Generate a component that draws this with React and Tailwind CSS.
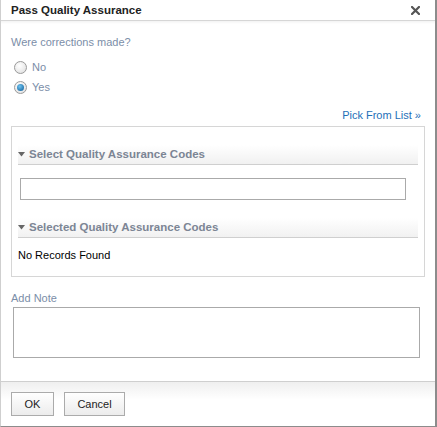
import { useState } from 'react'

const FONT = { fontFamily: '"Liberation Sans", Arial, sans-serif' }

function Radio({ checked, label, onClick }) {
  return (
    <label className="flex items-center gap-[5px] h-[20px] cursor-pointer" onClick={onClick}>
      <span
        className="w-[13px] h-[13px] rounded-full border border-[#9a9a9a] flex items-center justify-center"
        style={{ background: 'radial-gradient(circle at 40% 35%, #ffffff, #dcdcdc)' }}
      >
        {checked && (
          <span
            className="w-[7px] h-[7px] rounded-full"
            style={{ background: 'radial-gradient(circle at 40% 35%, #6fc3f0, #0b5a96)' }}
          />
        )}
      </span>
      <span className="text-[11px] text-[#7b8ea8]">{label}</span>
    </label>
  )
}

function SectionHead({ children }) {
  return (
    <div className="mx-[6px]">
      <div className="flex items-center gap-[4px] h-[19px] bg-gradient-to-b from-white to-[#f1f1f1]">
        <svg width="7" height="5" viewBox="0 0 7 5">
          <path d="M0 0 L7 0 L3.5 4.5 Z" fill="#666" />
        </svg>
        <span className="text-[11.5px] font-bold text-[#7c8594]">{children}</span>
      </div>
      <div className="h-[2px] border-t border-[#cfcfcf] bg-white" />
    </div>
  )
}

export default function App() {
  const [corrected, setCorrected] = useState(true)

  return (
    <div className="w-[437px] h-[427px] bg-white flex flex-col border-l border-[#cfcfcf] border-r-2 border-r-[#8c8c8c] border-b border-b-[#8c8c8c]" style={FONT}>
      {/* Header */}
      <div className="h-[21px] flex items-center justify-between pl-[10px] pr-[15px] border-b border-[#d6d6d6]">
        <span className="text-[11.5px] font-bold text-[#222] mt-[1px]">Pass Quality Assurance</span>
        <svg width="9" height="9" viewBox="0 0 9 9">
          <path d="M1 1 L8 8 M8 1 L1 8" stroke="#555" strokeWidth="2.2" strokeLinecap="square" />
        </svg>
      </div>
      <div className="h-[3px] bg-gradient-to-b from-[#f3f3f3] to-white" />

      <div className="flex-1 px-[10px] pt-[10px]">
        <div className="text-[11px] text-[#7b8ea8] h-[16px] leading-[16px]">Were corrections made?</div>
        <div className="mt-[7px] pl-[3px] flex flex-col">
          <Radio checked={!corrected} label="No" onClick={() => setCorrected(false)} />
          <Radio checked={corrected} label="Yes" onClick={() => setCorrected(true)} />
        </div>

        <div className="flex justify-end mt-[10px] pr-[4px]">
          <a className="text-[11px] text-[#1e6fb8] leading-[16px] cursor-pointer">Pick From List »</a>
        </div>

        <div className="mt-[3px] border border-[#d6d6d6] h-[151px] pt-[18px]">
          <SectionHead>Select Quality Assurance Codes</SectionHead>
          <div className="px-[8px] pr-[18px] mt-[10px]">
            <input className="w-full h-[22px] border border-[#aaa] outline-none px-[3px] text-[11px]" />
          </div>
          <div className="mt-[18px]">
            <SectionHead>Selected Quality Assurance Codes</SectionHead>
          </div>
          <div className="px-[6px] mt-[8px] text-[11px] text-black">No Records Found</div>
        </div>

        <div className="mt-[13px] text-[11px] text-[#7b8ea8] h-[16px] leading-[16px]">Add Note</div>
        <textarea className="mt-[1px] ml-[2px] w-[407px] h-[51px] border border-[#aaa] outline-none resize-none block text-[11px]" />
      </div>

      {/* Footer */}
      <div className="h-[45px] border-t border-[#cfcfcf] bg-gradient-to-b from-[#efefef] to-white to-[40%] flex items-start gap-[10px] pl-[10px] pt-[10px]">
        <button className="w-[43px] h-[24px] border border-[#ababab] bg-gradient-to-b from-white to-[#ececec] text-[11px] text-[#222]">OK</button>
        <button className="w-[61px] h-[24px] border border-[#ababab] bg-gradient-to-b from-white to-[#ececec] text-[11px] text-[#222]">Cancel</button>
      </div>
    </div>
  )
}
